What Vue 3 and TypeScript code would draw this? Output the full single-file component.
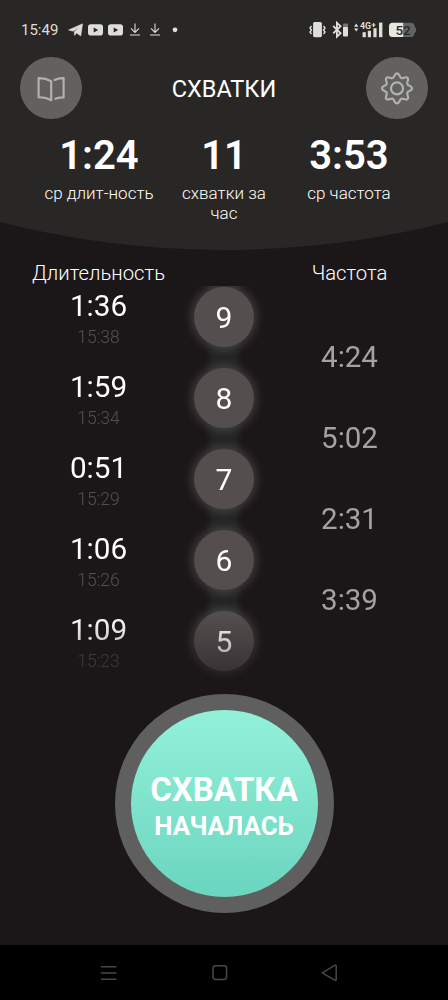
<script setup lang="ts">
interface Stat {
  value: string
  label: string
}
interface Contraction {
  index: number
  duration: string
  start: string
}

const stats: Stat[] = [
  { value: '1:24', label: 'ср длит-ность' },
  { value: '11', label: 'схватки за час' },
  { value: '3:53', label: 'ср частота' },
]

const contractions: Contraction[] = [
  { index: 9, duration: '1:36', start: '15:38' },
  { index: 8, duration: '1:59', start: '15:34' },
  { index: 7, duration: '0:51', start: '15:29' },
  { index: 6, duration: '1:06', start: '15:26' },
  { index: 5, duration: '1:09', start: '15:23' },
]

const intervals: string[] = ['3:37', '4:24', '5:02', '2:31', '3:39']
</script>

<template>
  <div class="screen">
    <header class="top">
      <div class="status">
        <span class="clock">15:49</span>
        <svg class="notif" width="114" height="20" viewBox="0 0 114 20">
          <path d="M0.5 10 L14.6 3.8 L12.8 16 L8.6 13 L6.6 15.4 L6.2 11.8 L11.4 7 L5 11.2 Z" fill="#deded9" stroke="#deded9" stroke-width="0.5" />
          <g v-for="x in [20, 40]" :key="x">
            <rect :x="x" y="4.2" width="15" height="11.4" rx="2.8" fill="#deded9" />
            <path :d="`M${x + 5.7} 7.4 L${x + 10.2} 9.9 L${x + 5.7} 12.4 Z`" fill="#282725" />
          </g>
          <g v-for="x in [62, 82]" :key="x" fill="none" stroke="#deded9" stroke-width="1.1">
            <path :d="`M${x + 5} 3.6 V12.4 M${x + 1} 8.4 L${x + 5} 12.4 L${x + 9} 8.4 M${x} 15 H${x + 10}`" />
          </g>
          <circle cx="107" cy="9.8" r="2.4" fill="#deded9" />
        </svg>
        <svg class="system" width="108" height="20" viewBox="0 0 108 20">
          <g fill="none" stroke="#deded9" stroke-width="1.4">
            <path d="M2.5 5 L1 7 L2.5 9 L1 11 L2.5 13" transform="translate(0 1)" />
            <path d="M14.5 5 L16 7 L14.5 9 L16 11 L14.5 13" transform="translate(0 1)" />
          </g>
          <rect x="4.1" y="2" width="8.8" height="15.2" rx="1.6" fill="#deded9" />
          <path d="M24.2 6 L31.6 13.2 L27.9 16.6 V2.8 L31.6 6.2 L24.2 13.4" fill="none" stroke="#deded9" stroke-width="1.8" />
          <rect x="34" y="3.6" width="5" height="4" rx="1" fill="#777673" />
          <rect x="34" y="7" width="5" height="9.6" rx="0.8" fill="#deded9" />
          <path d="M45 6.8 L47.2 3.6 L49.4 6.8 Z M45 8.4 L47.2 11.4 L49.4 8.4 Z" fill="#deded9" />
          <text x="51" y="9.2" class="net">4G</text>
          <path d="M64.6 3 V7 M62.6 5 H66.6" stroke="#deded9" stroke-width="1.2" />
          <g fill="#deded9">
            <rect x="53.6" y="12.2" width="3.2" height="5" />
            <rect x="58.8" y="10.8" width="3.2" height="6.4" />
            <rect x="64.4" y="8.2" width="3.2" height="9" />
            <rect x="70" y="2.6" width="3.4" height="14.6" />
          </g>
          <path d="M83.5 2.8 H94.5 V17 H83.5 Q80 17 80 13.5 V6.3 Q80 2.8 83.5 2.8 Z" fill="#e6e6e2" />
          <path d="M94.5 2.8 H102 Q105.3 2.8 105.6 6.5 L107 8.6 V11.2 L105.6 13.3 Q105.3 17 102 17 H94.5 Z" fill="#656462" />
          <text x="86.4" y="14.6" class="batt">5<tspan fill="#292826">2</tspan></text>
        </svg>
      </div>

      <div class="bar">
        <button class="round" aria-label="Book">
          <svg width="62" height="62" viewBox="0 0 62 62" fill="none" stroke="#b1b1b0" stroke-width="2.2" stroke-linejoin="round" stroke-linecap="round">
            <path d="M31.2 24.2 Q25.5 21 18.6 21.2 V40.3 Q25.5 40 31.2 43.2 Z" />
            <path d="M34.6 22.9 Q38.5 21 43.6 21.2 V40.4 Q39 40.4 35.4 41.8" />
          </svg>
        </button>
        <h1 class="title">СХВАТКИ</h1>
        <button class="round" aria-label="Settings">
          <svg width="62" height="62" viewBox="0 0 62 62" fill="none" stroke="#b1b1b0" stroke-width="2.2" stroke-linejoin="round">
            <circle cx="31" cy="31.4" r="6" />
            <path d="M31 16.4 C33.6 16.4 33.4 20.3 35.3 21.1 C37.2 21.9 39.8 19 41.6 20.8 C43.4 22.6 40.5 25.2 41.3 27.1 C42.1 29 46 28.8 46 31.4 C46 34 42.1 33.8 41.3 35.7 C40.5 37.6 43.4 40.2 41.6 42 C39.8 43.8 37.2 40.9 35.3 41.7 C33.4 42.5 33.6 46.4 31 46.4 C28.4 46.4 28.6 42.5 26.7 41.7 C24.8 40.9 22.2 43.8 20.4 42 C18.6 40.2 21.5 37.6 20.7 35.7 C19.9 33.8 16 34 16 31.4 C16 28.8 19.9 29 20.7 27.1 C21.5 25.2 18.6 22.6 20.4 20.8 C22.2 19 24.8 21.9 26.7 21.1 C28.6 20.3 28.4 16.4 31 16.4 Z" />
          </svg>
        </button>
      </div>

      <div class="stats">
        <div v-for="s in stats" :key="s.label" class="stat">
          <div class="value">{{ s.value }}</div>
          <div class="label">{{ s.label }}</div>
        </div>
      </div>
    </header>

    <div class="heads">
      <span class="head">Длительность</span>
      <span></span>
      <span class="head">Частота</span>
    </div>

    <main class="list">
      <div class="col">
        <div v-for="c in contractions" :key="c.index" class="cell">
          <div class="dur">{{ c.duration }}</div>
          <div class="start">{{ c.start }}</div>
        </div>
      </div>
      <div class="col centre">
        <div v-for="c in contractions" :key="c.index" class="cell mid">
          <div class="badge">{{ c.index }}</div>
        </div>
      </div>
      <div class="col shifted">
        <div v-for="f in intervals" :key="f" class="cell freq">{{ f }}</div>
      </div>
    </main>

    <div class="action">
      <button class="start-btn">
        <span class="disc">
          <span class="big">СХВАТКА</span>
          <span class="small">НАЧАЛАСЬ</span>
        </span>
      </button>
    </div>

    <nav class="nav">
      <svg width="448" height="55" viewBox="0 0 448 55" fill="none" stroke="#474747" stroke-width="1.5">
        <path d="M101 21.7 H116.5 M101 28 H116.5 M101 34.2 H116.5" />
        <rect x="213" y="20.8" width="13.6" height="13.6" rx="2.6" />
        <path d="M322.2 27.8 L335.2 20.2 Q336.2 19.9 336.2 21 V34.6 Q336.2 35.7 335.2 35.3 Z" stroke-linejoin="round" />
      </svg>
    </nav>
  </div>
</template>

<style>
body {
  margin: 0;
  background: #1b1618;
}
</style>

<style scoped>
.screen {
  width: 448px;
  height: 1000px;
  display: flex;
  flex-direction: column;
  overflow: hidden;
  background: #1b1618;
  color: #fff;
  font-family: Roboto, "Noto Sans", sans-serif;
}
.top {
  height: 250px;
  flex: none;
  background: #282725;
  clip-path: circle(910px at 50% -660px);
}
.status {
  height: 20px;
  padding: 20px 31px 0 21px;
  display: flex;
  align-items: center;
  color: #deded9;
}
.clock {
  width: 47px;
  font-size: 15px;
  line-height: 20px;
}
.system {
  margin-left: auto;
}
.net {
  font: 700 8.8px Roboto, sans-serif;
  fill: #deded9;
}
.batt {
  font: 500 13.5px Roboto, sans-serif;
  fill: #282725;
}
.bar {
  display: flex;
  justify-content: space-between;
  align-items: center;
  padding: 17px 20px 0;
}
.round {
  width: 62px;
  height: 62px;
  padding: 0;
  border: 0;
  border-radius: 50%;
  background: #62615f;
}
.round svg {
  display: block;
}
.title {
  margin: 1px 0 0;
  font-size: 23.5px;
  font-weight: 400;
  line-height: 28px;
}
.stats {
  display: grid;
  grid-template-columns: 125px 125px 125px;
  padding: 14px 0 0 36.5px;
  text-align: center;
}
.value {
  font-size: 40px;
  font-weight: 600;
  line-height: 46px;
}
.label {
  width: 114px;
  margin: 4px auto 0;
  font-size: 17px;
  font-weight: 300;
  line-height: 20px;
}
.heads {
  height: 36px;
  flex: none;
  display: grid;
  grid-template-columns: 125px 126px 125px;
  padding-left: 36px;
  justify-items: center;
}
.head {
  font-size: 20.3px;
  font-weight: 300;
  line-height: 24px;
  padding-top: 11px;
  white-space: nowrap;
}
.list {
  height: 404px;
  flex: none;
  overflow: hidden;
  display: grid;
  grid-template-columns: 125px 126px 125px;
  padding-left: 36px;
  -webkit-mask-image: linear-gradient(#000 330px, transparent 446px);
  mask-image: linear-gradient(#000 330px, transparent 446px);
}
.col {
  margin-top: -11px;
  text-align: center;
}
.centre {
  margin-top: -10px;
}
.shifted {
  margin-top: -50px;
}
.cell {
  height: 81px;
}
.dur {
  padding-top: 13px;
  font-size: 29.7px;
  line-height: 36px;
}
.start {
  font-size: 17.5px;
  font-weight: 300;
  line-height: 22px;
  padding-top: 2px;
  color: #544f51;
}
.mid {
  display: flex;
  align-items: center;
  justify-content: center;
  background: linear-gradient(90deg, transparent 43px, #232425 52px, #232425 74px, transparent 83px);
}
.mid:last-child {
  background-size: 100% 40px;
  background-repeat: no-repeat;
}
.badge {
  width: 60px;
  height: 60px;
  border-radius: 50%;
  background: #544e4e;
  box-shadow: 0 0 10px 3px rgba(110, 105, 104, 0.45);
  font-size: 30px;
  line-height: 62px;
}
.freq {
  line-height: 81px;
  font-size: 29.5px;
  color: #a5a1a2;
}
.action {
  height: 255px;
  flex: none;
  display: flex;
  justify-content: center;
}
.start-btn {
  width: 219px;
  height: 219px;
  margin-top: 4px;
  border: 0;
  border-radius: 50%;
  padding: 16px;
  background: #5f5f5f;
  color: #fff;
  font-family: inherit;
}
.disc {
  height: 187px;
  box-sizing: border-box;
  padding-top: 6px;
  border-radius: 50%;
  background: linear-gradient(#93f1d9, #6bd5bf);
  display: flex;
  flex-direction: column;
  align-items: center;
  justify-content: center;
}
.big {
  font-size: 33px;
  font-weight: 700;
  line-height: 38px;
}
.small {
  font-size: 25.8px;
  font-weight: 700;
  line-height: 34px;
}
.nav {
  height: 55px;
  flex: none;
  background: #000;
}
.nav svg {
  display: block;
}
</style>
